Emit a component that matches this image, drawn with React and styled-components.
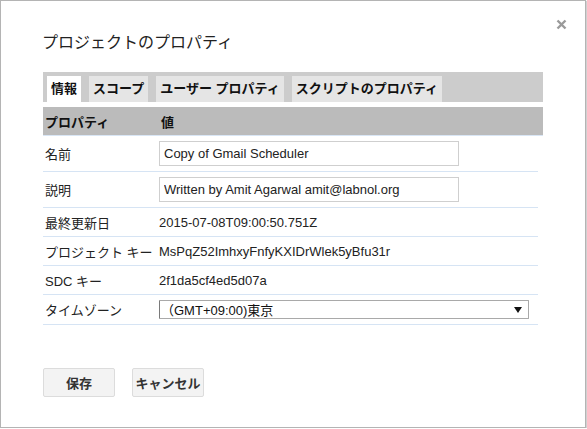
import React from 'react';
import styled, { createGlobalStyle } from 'styled-components';

const GlobalStyle = createGlobalStyle`
  body {
    margin: 0;
    background: #ffffff;
    font-family: "Liberation Sans", Arial, "Noto Sans CJK JP", sans-serif;
    color: #222;
  }
`;

const tabs = ['情報', 'スコープ', 'ユーザー プロパティ', 'スクリプトのプロパティ'];

const props = [
  { label: '名前', kind: 'input', value: 'Copy of Gmail Scheduler' },
  { label: '説明', kind: 'input', value: 'Written by Amit Agarwal amit@labnol.org' },
  { label: '最終更新日', kind: 'text', value: '2015-07-08T09:00:50.751Z' },
  { label: 'プロジェクト キー', kind: 'text', value: 'MsPqZ52ImhxyFnfyKXIDrWlek5yBfu31r' },
  { label: 'SDC キー', kind: 'text', value: '2f1da5cf4ed5d07a' },
  { label: 'タイムゾーン', kind: 'select', value: '（GMT+09:00)東京' },
];

function App() {
  return (
    <>
      <GlobalStyle />
      <Dialog>
        <CloseButton aria-label="閉じる">
          <svg width="11" height="11" viewBox="0 0 11 11">
            <path d="M1.5 1.5 L9.5 9.5 M9.5 1.5 L1.5 9.5" stroke="#9a9a9a" strokeWidth="2.4" />
          </svg>
        </CloseButton>
        <Title>プロジェクトのプロパティ</Title>

        <TabBar>
          {tabs.map((t, i) => (
            <Tab key={t} active={i === 0}>
              {t}
            </Tab>
          ))}
        </TabBar>

        <HeaderRow>
          <HeaderCell>プロパティ</HeaderCell>
          <HeaderCell>値</HeaderCell>
        </HeaderRow>

        <Rows>
          {props.map((p) => (
            <PropRow key={p.label} kind={p.kind}>
              <Label>{p.label}</Label>
              {p.kind === 'input' && <TextBox defaultValue={p.value} />}
              {p.kind === 'text' && <Value>{p.value}</Value>}
              {p.kind === 'select' && (
                <SelectBox>
                  <span>{p.value}</span>
                  <svg width="8" height="6" viewBox="0 0 8 6">
                    <path d="M0 0 H8 L4 6 Z" fill="#111" />
                  </svg>
                </SelectBox>
              )}
            </PropRow>
          ))}
        </Rows>

        <Buttons>
          <Button>保存</Button>
          <Button>キャンセル</Button>
        </Buttons>
      </Dialog>
    </>
  );
}

const Dialog = styled.div`
  position: relative;
  box-sizing: border-box;
  width: 586px;
  height: 428px;
  padding: 32px 0 0 42px;
  border: 1px solid #b4b4b4;
  box-shadow: 1px 1px 1px rgba(0, 0, 0, 0.18);
  background: #fff;
`;

const CloseButton = styled.div`
  position: absolute;
  top: 18px;
  right: 18px;
  width: 11px;
  height: 11px;
  cursor: pointer;

  svg {
    display: block;
  }
`;

const Title = styled.h1`
  margin: 0 0 0 -1px;
  font-size: 16px;
  font-weight: normal;
  line-height: 20px;
  color: #222;
`;

const TabBar = styled.div`
  display: flex;
  gap: 8px;
  box-sizing: border-box;
  width: 500px;
  height: 30px;
  margin-top: 19px;
  padding: 4px 0 0 4px;
  background: #cccccc;
`;

const Tab = styled.div`
  height: 26px;
  padding: 0 4px;
  line-height: 26px;
  font-size: 13px;
  font-weight: bold;
  color: #111;
  white-space: nowrap;
  background: ${({ active }) => (active ? '#ffffff' : '#e5e5e5')};
`;

const HeaderRow = styled.div`
  display: grid;
  grid-template-columns: 116px 1fr;
  align-items: center;
  width: 500px;
  height: 28px;
  margin-top: 5px;
  background: #bbbbbb;
  border-bottom: 1px solid #d9e6f5;
`;

const HeaderCell = styled.div`
  padding-left: 2px;
  font-size: 13px;
  font-weight: bold;
  color: #111;
`;

const Rows = styled.div`
  width: 495px;
`;

const PropRow = styled.div`
  display: grid;
  grid-template-columns: 116px 1fr;
  align-items: center;
  box-sizing: content-box;
  height: ${({ kind }) => (kind === 'input' ? '35px' : kind === 'select' ? '29px' : '28px')};
  border-bottom: 1px solid #d6e4f4;
`;

const Label = styled.div`
  padding-left: 2px;
  font-size: 13px;
  color: #222;
  white-space: nowrap;
`;

const Value = styled.div`
  font-size: 13px;
  color: #222;
  white-space: nowrap;
`;

const TextBox = styled.input.attrs({ type: 'text', readOnly: true })`
  box-sizing: border-box;
  width: 300px;
  height: 25px;
  padding: 0 4px;
  border: 1px solid #cfcfcf;
  outline: none;
  font-family: "Liberation Sans", Arial, "Noto Sans CJK JP", sans-serif;
  font-size: 13px;
  color: #222;
`;

const SelectBox = styled.div`
  display: flex;
  align-items: center;
  justify-content: space-between;
  box-sizing: border-box;
  width: 370px;
  height: 19px;
  padding: 0 6px 0 1px;
  border: 1px solid #a9a9a9;
  border-left-color: #7a7a7a;
  border-radius: 1px;
  font-size: 13px;
  color: #111;
  white-space: nowrap;

  svg {
    display: block;
  }
`;

const Buttons = styled.div`
  display: flex;
  gap: 17px;
  margin-top: 43px;
`;

const Button = styled.button`
  box-sizing: border-box;
  width: 72px;
  height: 29px;
  padding: 0;
  border: 1px solid #dcdcdc;
  border-radius: 2px;
  background: #f3f3f3;
  font-family: "Liberation Sans", Arial, "Noto Sans CJK JP", sans-serif;
  font-size: 13px;
  font-weight: bold;
  color: #333;
  cursor: pointer;
`;

export default App;
